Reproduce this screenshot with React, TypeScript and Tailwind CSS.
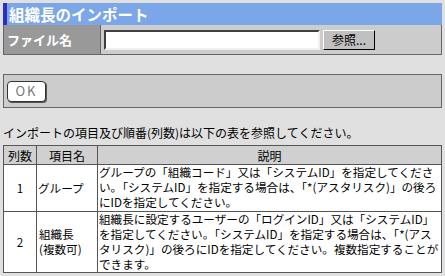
import React from "react";

const jp = { fontFamily: '"MS UI Gothic", "Noto Sans CJK JP", sans-serif' };

export default function App() {
  return (
    <div className="w-[445px] h-[276px] bg-[#e0e0e0] px-[3px] pt-[3px] overflow-hidden" style={jp}>
      {/* タイトル */}
      <div className="flex h-[22px] bg-[#7ba6e8]">
        <div className="w-[4px] bg-[#2b2fc4]" />
        <div className="pl-[2px] text-[15.5px] font-bold leading-[22px] text-white">組織長のインポート</div>
      </div>

      {/* ファイル名 */}
      <div className="flex h-[30px] border border-[#666666] border-t-0">
        <div className="flex w-[97px] items-center border-r border-[#666666] bg-[#999999] pl-[3px] text-[13px] font-bold text-white">
          ファイル名
        </div>
        <div className="flex flex-1 items-center gap-[3px] bg-[#cccccc] pl-[3px]">
          <div className="h-[20px] w-[216px] border-2 border-t-[#404040] border-l-[#404040] border-r-[#f0f0f0] border-b-[#f0f0f0] bg-white" />
          <div className="flex h-[20px] w-[52px] items-center justify-center border border-t-white border-l-white border-r-black border-b-black bg-[#c0c0c0] text-[12px] text-black">
            参照...
          </div>
        </div>
      </div>

      {/* OK */}
      <div className="mt-[19px] flex h-[34px] items-center border border-[#666666] bg-[#cccccc] pl-[3px]">
        <div className="flex h-[21px] w-[39px] items-center justify-center rounded-[4px] border border-[#333333] bg-white text-[13px] tracking-[2px] text-[#777777] shadow-[1px_1px_0_#555555]">
          OK
        </div>
      </div>

      <p className="mt-[18px] text-[12px] leading-[14px] text-black">
        インポートの項目及び順番(列数)は以下の表を参照してください。
      </p>

      <table className="mt-[5px] w-[439px] border-collapse border border-[#555555] text-[11.6px] leading-[15px] text-black">
        <thead>
          <tr className="h-[19px] bg-[#d0d0d0]">
            <th className="w-[33px] border border-[#555555] text-[12px] font-normal">列数</th>
            <th className="w-[61px] border border-[#555555] text-[12px] font-normal">項目名</th>
            <th className="border border-[#555555] text-[12px] font-normal">説明</th>
          </tr>
        </thead>
        <tbody className="bg-white">
          <tr className="h-[47px]">
            <td className="border border-[#555555] text-center">1</td>
            <td className="border border-[#555555] pl-[1px]">グループ</td>
            <td className="border border-[#555555] pl-[1px] align-top whitespace-nowrap">
              グループの「組織コード」又は「システムID」を指定してくださ
              <br />
              い。「システムID」を指定する場合は、「*(アスタリスク)」の後ろ
              <br />
              にIDを指定してください。
            </td>
          </tr>
          <tr className="h-[61px]">
            <td className="border border-[#555555] text-center">2</td>
            <td className="border border-[#555555] pl-[2px]">
              組織長
              <br />
              (複数可)
            </td>
            <td className="border border-[#555555] pl-[1px] align-top whitespace-nowrap">
              組織長に設定するユーザーの「ログインID」又は「システムID」
              <br />
              を指定してください。「システムID」を指定する場合は、「*(アス
              <br />
              タリスク)」の後ろにIDを指定してください。複数指定することが
              <br />
              できます。
            </td>
          </tr>
        </tbody>
      </table>
    </div>
  );
}
